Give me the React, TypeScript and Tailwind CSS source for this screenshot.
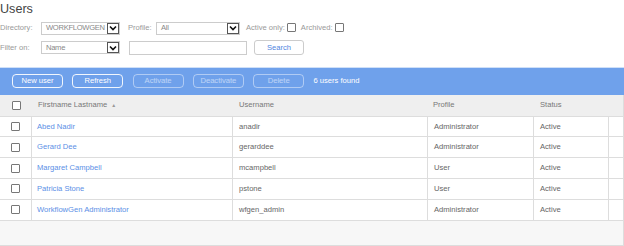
import type { ReactNode } from 'react'

type User = { name: string; username: string; profile: string; status: string }

const users: User[] = [
  { name: 'Abed Nadir', username: 'anadir', profile: 'Administrator', status: 'Active' },
  { name: 'Gerard Dee', username: 'gerarddee', profile: 'Administrator', status: 'Active' },
  { name: 'Margaret Campbell', username: 'mcampbell', profile: 'User', status: 'Active' },
  { name: 'Patricia Stone', username: 'pstone', profile: 'User', status: 'Active' },
  { name: 'WorkflowGen Administrator', username: 'wfgen_admin', profile: 'Administrator', status: 'Active' },
]

function Chevron() {
  return (
    <span className="flex h-full w-[12px] shrink-0 items-center justify-center border border-[#555] bg-white">
      <svg width="8" height="6" viewBox="0 0 8 6">
        <polyline points="1,1.5 4,4.5 7,1.5" fill="none" stroke="#111" strokeWidth="1.6" />
      </svg>
    </span>
  )
}

function Select({ value, width }: { value: string; width: string }) {
  return (
    <div className={`flex h-[13px] items-center border border-[#ccc] bg-white pl-[4px] ${width}`}>
      <span className="min-w-0 flex-1 whitespace-nowrap tracking-[-0.3px] text-[#888]">{value}</span>
      <Chevron />
    </div>
  )
}

function Checkbox() {
  return <span className="inline-block h-[9px] w-[9px] rounded-[1px] border border-[#777] bg-white" />
}

function ToolButton({ children, disabled }: { children: ReactNode; disabled?: boolean }) {
  return (
    <button type="button" className={getToolClass(!!disabled)}>
      {children}
    </button>
  )
}

export default function App() {
  return (
    <div className="w-[624px] bg-white font-['Liberation_Sans',Arial,sans-serif] text-[7.6px] leading-none">
      <h1 className="pt-[3px] text-[12.6px] leading-none text-[#444]">Users</h1>

      <div className="mt-[6px] flex h-[13px] items-center">
        <span className="w-[41px] text-[#999]">Directory:</span>
        <Select value="WORKFLOWGEN" width="w-[79px]" />
        <span className="ml-[8px] w-[28px] text-[#999]">Profile:</span>
        <Select value="All" width="w-[84px]" />
        <span className="ml-[6px] text-[#999]">Active only:</span>
        <span className="ml-[2px]"><Checkbox /></span>
        <span className="ml-[5px] text-[#999]">Archived:</span>
        <span className="ml-[2px]"><Checkbox /></span>
      </div>

      <div className="mt-[6px] flex h-[14px] items-center">
        <span className="w-[41px] text-[#999]">Filter on:</span>
        <Select value="Name" width="w-[79px]" />
        <div className="ml-[9px] h-[14px] w-[118px] border border-[#ccc] bg-white" />
        <button
          type="button"
          className="ml-[7px] h-[15px] w-[50px] rounded-[3px] border border-[#ccc] bg-white text-[#4f86e0]"
        >
          Search
        </button>
      </div>

      <div className="mt-[12px] flex h-[28px] items-center gap-[9.3px] border-t border-[#cfe0f8] bg-[#6fa1eb] pl-[12px]">
        <ToolButton>New user</ToolButton>
        <ToolButton>Refresh</ToolButton>
        <ToolButton disabled>Activate</ToolButton>
        <ToolButton disabled>Deactivate</ToolButton>
        <ToolButton disabled>Delete</ToolButton>
        <span className="text-white">6 users found</span>
      </div>

      <div className="border-r border-[#ddd]">
        <div className="flex h-[22px] items-center border-b border-[#ddd] bg-[#efefef] text-[#777]">
          <div className="flex w-[32px] justify-center"><Checkbox /></div>
          <div className="w-[201px] pl-[6px]">
            Firstname Lastname <span className="ml-[2px] text-[5px] text-[#999]">▲</span>
          </div>
          <div className="w-[195px] pl-[6px]">Username</div>
          <div className="w-[106px] pl-[5px]">Profile</div>
          <div className="w-[75px] pl-[6px]">Status</div>
        </div>

        {users.map((user) => (
          <div key={user.username} className="flex h-[20.8px] items-stretch border-b border-[#ddd] bg-white text-[#666]">
            <div className="flex w-[32px] items-center justify-center border-r border-[#ddd]"><Checkbox /></div>
            <div className="flex w-[201px] items-center border-r border-[#ddd] pl-[5px] text-[#5b8fe6]">{user.name}</div>
            <div className="flex w-[195px] items-center border-r border-[#ddd] pl-[6px]">{user.username}</div>
            <div className="flex w-[106px] items-center border-r border-[#ddd] pl-[6px]">{user.profile}</div>
            <div className="flex w-[75px] items-center border-r border-[#ddd] pl-[6px]">{user.status}</div>
          </div>
        ))}

        <div className="h-[25px] border-b border-[#ddd] bg-[#f7f7f7]" />
      </div>
    </div>
  )
}

function getToolClass(disabled: boolean) {
  if (disabled) return 'h-[14px] w-[51px] rounded-[4px] border border-white/45 text-white/55'
  return 'h-[14px] w-[51px] rounded-[4px] border border-white/90 text-white'
}
